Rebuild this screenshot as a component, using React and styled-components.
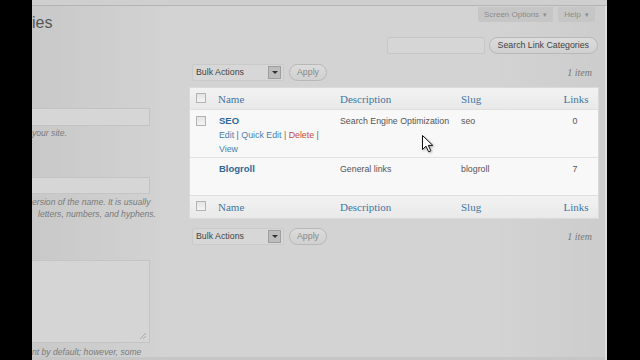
import React from 'react'
import styled, { createGlobalStyle } from 'styled-components'

const GlobalStyle = createGlobalStyle`
  html, body {
    margin: 0;
    padding: 0;
    background: #000000;
  }
  body {
    font-family: "Liberation Sans", Arial, sans-serif;
  }
`

const categories = [
  { name: 'SEO', description: 'Search Engine Optimization', slug: 'seo', links: 0, actions: true },
  { name: 'Blogroll', description: 'General links', slug: 'blogroll', links: 7, actions: false },
]

export default function App() {
  return (
    <Frame>
      <GlobalStyle />
      <Side />
      <Page>
        <LeftCol>
          <Heading>ies</Heading>
          <Field />
          <Hint>your site.</Hint>
          <Field second />
          <Hint gap={2}>
            <HintLine>ersion of the name. It is usually</HintLine>
            <HintLine indent>letters, numbers, and hyphens.</HintLine>
          </Hint>
          <TextArea>
            <Grip />
          </TextArea>
          <Hint gap={3}>nt by default; however, some</Hint>
        </LeftCol>

        <RightCol>
          <Tabs>
            <Tab>Screen Options <Caret>▾</Caret></Tab>
            <Tab>Help <Caret>▾</Caret></Tab>
          </Tabs>

          <SearchRow>
            <SearchInput />
            <PillButton wide>Search Link Categories</PillButton>
          </SearchRow>

          <TableNav>
            <BulkSelect>
              Bulk Actions
              <SelectArrow />
            </BulkSelect>
            <PillButton>Apply</PillButton>
            <Count>1 item</Count>
          </TableNav>

          <Table>
            <HeadRow>
              <Cell><Check /></Cell>
              <HeadCell>Name</HeadCell>
              <HeadCell>Description</HeadCell>
              <HeadCell>Slug</HeadCell>
              <HeadCell center>Links</HeadCell>
            </HeadRow>
            {categories.map((c) => (
              <BodyRow key={c.slug} tall={c.actions}>
                <Cell>{c.actions && <Check />}</Cell>
                <Cell>
                  <RowTitle>{c.name}</RowTitle>
                  {c.actions && (
                    <Actions>
                      <Action>Edit</Action> | <Action>Quick Edit</Action> | <Action danger>Delete</Action> |
                      <br />
                      <Action>View</Action>
                    </Actions>
                  )}
                </Cell>
                <Cell>{c.description}</Cell>
                <Cell>{c.slug}</Cell>
                <Cell center>{c.links}</Cell>
              </BodyRow>
            ))}
            <HeadRow foot>
              <Cell><Check /></Cell>
              <HeadCell>Name</HeadCell>
              <HeadCell>Description</HeadCell>
              <HeadCell>Slug</HeadCell>
              <HeadCell center>Links</HeadCell>
            </HeadRow>
            <Cursor viewBox="0 0 12 18">
              <path d="M0.5 0.5 L0.5 14.5 L4 11.2 L6.6 16.8 L8.8 15.8 L6.3 10.4 L10.8 10.4 Z" fill="#ffffff" stroke="#111111" strokeWidth="1" strokeLinejoin="round" />
            </Cursor>
          </Table>

          <TableNav bottom>
            <BulkSelect>
              Bulk Actions
              <SelectArrow />
            </BulkSelect>
            <PillButton>Apply</PillButton>
            <Count>1 item</Count>
          </TableNav>
        </RightCol>
      </Page>
      <Side />
    </Frame>
  )
}

const Frame = styled.div`
  display: flex;
  width: 640px;
  height: 360px;
  overflow: hidden;
  background: #000000;
`
const Side = styled.div`
  width: 32px;
  flex-shrink: 0;
  background: #000000;
`
const Page = styled.div`
  display: flex;
  width: 575px;
  height: 360px;
  box-sizing: border-box;
  padding-right: 8px;
  background: #d3d3d3;
  background-image: linear-gradient(90deg, rgba(0,0,0,0.05), rgba(0,0,0,0) 25%, rgba(0,0,0,0) 80%, rgba(0,0,0,0.03));
  border-top: 5px solid #cfcfcf;
  box-shadow: inset 0 1px 0 #b4b4b4, inset -2px 0 0 #dedede, inset 0 -3px 0 #c6c6c6;
  overflow: hidden;
`

/* Colonne gauche : formulaire coupé */
const LeftCol = styled.div`
  display: flex;
  flex-direction: column;
  width: 118px;
  margin-right: 39px;
  flex-shrink: 0;
`
const Heading = styled.h2`
  margin: 8px 0 0 0;
  font-size: 16px;
  line-height: 20px;
  font-weight: normal;
  color: #555555;
  font-family: "Liberation Sans", Arial, sans-serif;
`
const Field = styled.div`
  margin-top: ${(p) => (p.second ? '38px' : '75px')};
  height: ${(p) => (p.second ? '17px' : '18px')};
  box-sizing: border-box;
  border: 1px solid #c4c4c4;
  border-left: none;
  background: #d6d6d6;
`
const Hint = styled.div`
  margin-top: ${(p) => (p.gap !== undefined ? p.gap : 1)}px;
  font-size: 8.6px;
  line-height: 12px;
  font-style: italic;
  color: #7a7a7a;
  white-space: nowrap;
`
const HintLine = styled.div`
  padding-left: ${(p) => (p.indent ? '6px' : '0')};
`
const TextArea = styled.div`
  display: flex;
  align-items: flex-end;
  justify-content: flex-end;
  margin-top: 40px;
  height: 83px;
  box-sizing: border-box;
  border: 1px solid #c4c4c4;
  border-left: none;
  background: #d5d5d5;
  padding: 3px;
`
const Grip = styled.div`
  width: 6px;
  height: 6px;
  background: linear-gradient(135deg, transparent 45%, #aaaaaa 45%, #aaaaaa 55%, transparent 55%, transparent 70%, #aaaaaa 70%, #aaaaaa 80%, transparent 80%);
`

/* Colonne droite : tableau */
const RightCol = styled.div`
  display: flex;
  flex-direction: column;
  width: 410px;
  flex-shrink: 0;
`
const Tabs = styled.div`
  display: flex;
  justify-content: flex-end;
  gap: 5px;
  padding-right: 4px;
  margin-top: 2px;
`
const Tab = styled.div`
  height: 15px;
  line-height: 15px;
  padding: 0 6px;
  background: #c6c6c6;
  color: #8c8c8c;
  font-size: 8px;
  border-radius: 0 0 2px 2px;
`
const Caret = styled.span`
  font-size: 7px;
  margin-left: 2px;
`
const SearchRow = styled.div`
  display: flex;
  justify-content: flex-end;
  align-items: center;
  gap: 4px;
  margin-top: 15px;
  padding-right: 1px;
`
const SearchInput = styled.div`
  width: 98px;
  height: 17px;
  box-sizing: border-box;
  border: 1px solid #c6c6c6;
  background: #d6d6d6;
  border-radius: 2px;
`
const PillButton = styled.div`
  height: 17px;
  box-sizing: border-box;
  padding: 0 ${(p) => (p.wide ? '8px' : '7px')};
  line-height: 15px;
  border: 1px solid #b8b8b8;
  border-radius: 9px;
  background: linear-gradient(#dcdcdc, #d0d0d0);
  font-size: 8.8px;
  color: ${(p) => (p.wide ? '#444444' : '#888888')};
  white-space: nowrap;
`
const TableNav = styled.div`
  display: flex;
  align-items: center;
  gap: 5px;
  height: 18px;
  margin-top: ${(p) => (p.bottom ? '8px' : '9px')};
  padding-left: 3px;
  padding-right: 7px;
`
const BulkSelect = styled.div`
  display: flex;
  align-items: center;
  justify-content: space-between;
  width: 92px;
  height: 17px;
  box-sizing: border-box;
  padding: 0 2px 0 3px;
  background: #d7d7d7;
  border: 1px solid #cacaca;
  border-radius: 2px;
  font-size: 8.8px;
  color: #444444;
`
const SelectArrow = styled.div`
  width: 13px;
  height: 13px;
  box-sizing: border-box;
  border: 1px solid #9e9e9e;
  background: #bdbdbd;
  position: relative;
  &::after {
    content: '';
    position: absolute;
    left: 3px;
    top: 4px;
    border-left: 3px solid transparent;
    border-right: 3px solid transparent;
    border-top: 3px solid #333333;
  }
`
const Count = styled.div`
  margin-left: auto;
  font-family: "Liberation Serif", Georgia, serif;
  font-style: italic;
  font-size: 10px;
  color: #777777;
`
const Table = styled.div`
  position: relative;
  margin-top: 6px;
  border: 1px solid #dadada;
  background: #f8f8f8;
  font-size: 8.8px;
  color: #555555;
`
const Row = styled.div`
  display: grid;
  grid-template-columns: 28px 122px 121px 1fr 46px;
`
const HeadRow = styled(Row)`
  height: ${(p) => (p.foot ? '22px' : '21px')};
  align-items: center;
  background: linear-gradient(#f2f2f2, #e9e9e9);
  border-top: ${(p) => (p.foot ? '1px solid #dfdfdf' : 'none')};
  border-bottom: ${(p) => (p.foot ? 'none' : '1px solid #dfdfdf')};
`
const BodyRow = styled(Row)`
  box-sizing: border-box;
  min-height: ${(p) => (p.tall ? '47px' : '38px')};
  padding-top: 4px;
  line-height: 14px;
  & + & {
    border-top: 1px solid #e2e2e2;
  }
`
const Cell = styled.div`
  text-align: ${(p) => (p.center ? 'center' : 'left')};
`
const HeadCell = styled.div`
  font-family: "Liberation Serif", Georgia, serif;
  font-size: 11px;
  color: #3f76a3;
  text-align: ${(p) => (p.center ? 'center' : 'left')};
  padding-left: ${(p) => (p.center ? '2px' : '0')};
`
const Check = styled.span`
  display: inline-block;
  width: 10px;
  height: 10px;
  margin-left: 6px;
  box-sizing: border-box;
  border: 1px solid #b3b3b3;
  background: linear-gradient(#e4e4e4, #f4f4f4);
  vertical-align: middle;
  position: relative;
  top: -1px;
`
const RowTitle = styled.div`
  font-weight: bold;
  font-size: 9.5px;
  color: #2d6899;
  padding-left: 1px;
`
const Actions = styled.div`
  color: #6a6a6a;
  padding-left: 1px;
`
const Action = styled.span`
  color: ${(p) => (p.danger ? '#c4483e' : '#4a80b0')};
`
const Cursor = styled.svg`
  position: absolute;
  left: 232px;
  top: 47px;
  width: 12px;
  height: 18px;
  filter: drop-shadow(1px 1px 1px rgba(0,0,0,0.3));
`
